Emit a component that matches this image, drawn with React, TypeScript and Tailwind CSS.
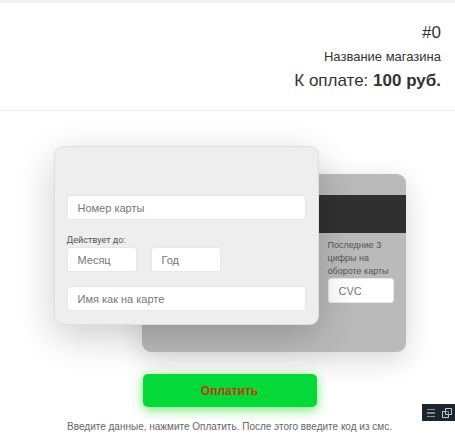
import {useState} from "react";

interface FieldProps {
    id: string;
    placeholder: string;
    className?: string;
    value: string;
    onChange: (id: string, value: string) => void;
}

const initialForm: Record<string, string> = {
    number: "",
    month: "",
    year: "",
    holder: "",
    cvc: ""
};

function Field({id, placeholder, className = "w-full", value, onChange}: FieldProps) {
    return (
        <input
            id={id}
            type="text"
            placeholder={placeholder}
            aria-label={placeholder}
            value={value}
            onChange={(e) => onChange(id, e.target.value)}
            className={"block h-[25px] rounded-[3px] border border-[#e6e7e9] bg-white px-2.5 text-[11px] text-[#444] outline-none placeholder:text-[#777] " + className}
        />
    )
}

function App() {
    const [form, setForm] = useState(initialForm);

    function change(id: string, value: string) {
        setForm({...form, [id]: value})
    }

    return (
        <main className="min-h-screen overflow-hidden border-t-3 border-[#eef2f4] bg-white font-['Liberation_Sans',Arial,sans-serif] text-[#333]">
            <header className="flex flex-col items-end border-b border-[#eceeef] pt-[18px] pr-3.5 pb-[17px] text-right">
                <div className="text-[17px] leading-6">#0</div>
                <div className="text-[13px] leading-6">Название магазина</div>
                <div className="text-[17px] leading-6">К оплате: <b>100 руб.</b></div>
            </header>

            <form className="flex flex-col items-center pt-[35px] pl-1" onSubmit={(e) => e.preventDefault()}>
                {/* both sides of the card share one grid cell */}
                <div className="grid w-[352px] max-w-full">
                    <section
                        className="col-start-1 row-start-1 mt-7 h-[178px] w-[264px] justify-self-end rounded-[9px] bg-[#bababa] pt-[21px] shadow-[0_8px_28px_rgba(0,0,0,0.16)]">
                        <div className="h-[38px] bg-[#303030]"/>
                        <div className="ml-auto w-[78px] pt-1.5 pr-3">
                            <label htmlFor="cvc" className="block text-[9px] leading-[13px] whitespace-nowrap text-[#555]">
                                Последние 3<br/>цифры на<br/>обороте карты
                            </label>
                            <Field id="cvc" placeholder="CVC" value={form.cvc} onChange={change}/>
                        </div>
                    </section>

                    <section
                        className="z-10 col-start-1 row-start-1 w-[265px] self-start rounded-[9px] border border-[#dcdfe0] bg-[#eeeeee] px-3 pt-12 pb-[13px] shadow-[0_12px_38px_rgba(0,0,0,0.2)]">
                        <Field id="number" placeholder="Номер карты" value={form.number} onChange={change}/>
                        <label htmlFor="month" className="mt-3.5 block font-['Roboto',sans-serif] text-[9px] leading-[13px] text-[#555]">
                            Действует до:
                        </label>
                        <div className="flex gap-3.5">
                            <Field id="month" placeholder="Месяц" className="w-[70px]" value={form.month} onChange={change}/>
                            <Field id="year" placeholder="Год" className="w-[70px]" value={form.year} onChange={change}/>
                        </div>
                        <div className="mt-3.5">
                            <Field id="holder" placeholder="Имя как на карте" value={form.holder} onChange={change}/>
                        </div>
                    </section>
                </div>

                <button
                    type="submit"
                    className="mt-[22px] h-[33px] w-[174px] cursor-pointer rounded-[5px] bg-[#04d939] text-[12px] font-bold text-[#c23a08] shadow-[0_3px_12px_rgba(40,220,40,0.65)]">
                    Оплатить
                </button>
                <p className="mt-3 text-center text-[10px] leading-4 text-[#666]">
                    Введите данные, нажмите Оплатить. После этого введите код из смс.
                </p>
            </form>

            <div className="fixed right-0 bottom-[22px] flex h-[17px] w-[33px] items-center justify-between bg-[#1b252d] pr-[3px] pl-[5px]">
                <button type="button" aria-label="Меню">
                    <svg width="9" height="10" viewBox="0 0 9 10" fill="none">
                        <path d="M0 1.5h8M0 8.5h8" stroke="#8b949a"/>
                        <path d="M0 5h8" stroke="#e2e8eb"/>
                    </svg>
                </button>
                <button type="button" aria-label="Окна">
                    <svg width="10" height="10" viewBox="0 0 10 10" fill="none" stroke="#c3cbd0">
                        <path d="M3.5 .5h6v6h-6zM3.5 3.5h-3v6h6v-3"/>
                        <path d="M3.5 3.5h3v3" stroke="#8b949a"/>
                    </svg>
                </button>
            </div>
        </main>
    )
}

export default App
